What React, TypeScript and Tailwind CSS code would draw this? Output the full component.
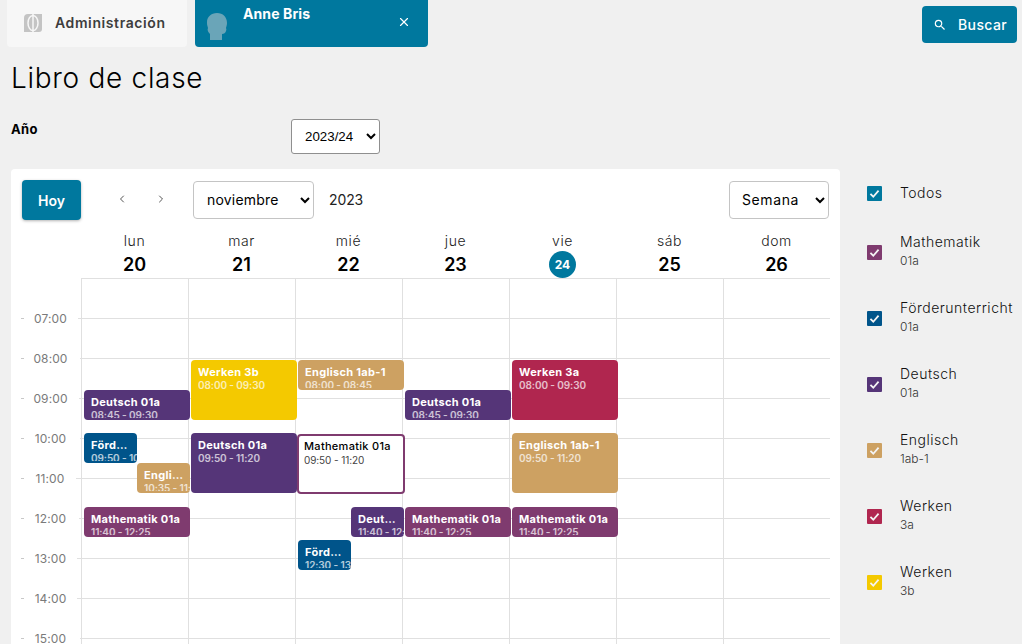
import React from 'react';
import { X, ChevronLeft, ChevronRight } from 'lucide-react';

const font = { fontFamily: 'Inter, "Open Sans", sans-serif' };

const days = [
    { name: 'lun', num: '20' },
    { name: 'mar', num: '21' },
    { name: 'mié', num: '22' },
    { name: 'jue', num: '23' },
    { name: 'vie', num: '24', today: true },
    { name: 'sáb', num: '25' },
    { name: 'dom', num: '26' },
];

const hours = [
    { label: '', line: '' },
    { label: '07:00', line: 'w-[3px]' },
    { label: '08:00', line: 'w-[1px]' },
    { label: '09:00', line: 'w-[2px]' },
    { label: '10:00', line: 'w-[1px]' },
    { label: '11:00', line: 'w-[5px]' },
    { label: '12:00', line: 'w-[2px]' },
    { label: '13:00', line: 'w-[4px]' },
    { label: '14:00', line: 'w-[4px]' },
    { label: '15:00', line: 'w-[1px]' },
];

const colors = {
    teal: 'bg-[#00789e]',
    math: 'bg-[#7f3b6f]',
    blue: 'bg-[#00548a]',
    deutsch: 'bg-[#553578]',
    tan: 'bg-[#cda162]',
    red: 'bg-[#b0264f]',
    yellow: 'bg-[#f4c900]',
};

// x / y are page coordinates taken from the timetable, converted to the grid below
const events = [
    { title: 'Deutsch 01a', time: '08:45 - 09:30', x: 84, y: 390, w: 106, h: 30, bg: colors.deutsch },
    { title: 'Förderunterricht', time: '09:50 - 10:35', x: 84, y: 433, w: 53, h: 30, bg: colors.blue },
    { title: 'Englisch', time: '10:35 - 11:20', x: 137, y: 463, w: 53, h: 30, bg: colors.tan },
    { title: 'Mathematik 01a', time: '11:40 - 12:25', x: 84, y: 507, w: 106, h: 30, bg: colors.math },
    { title: 'Werken 3b', time: '08:00 - 09:30', x: 191, y: 360, w: 106, h: 60, bg: colors.yellow },
    { title: 'Deutsch 01a', time: '09:50 - 11:20', x: 191, y: 433, w: 106, h: 60, bg: colors.deutsch },
    { title: 'Englisch 1ab-1', time: '08:00 - 08:45', x: 298, y: 360, w: 106, h: 30, bg: colors.tan },
    { title: 'Deutsch', time: '11:40 - 12:25', x: 351, y: 507, w: 53, h: 30, bg: colors.deutsch },
    { title: 'Förderunterricht', time: '12:30 - 13:15', x: 298, y: 540, w: 53, h: 30, bg: colors.blue },
    { title: 'Deutsch 01a', time: '08:45 - 09:30', x: 405, y: 390, w: 106, h: 30, bg: colors.deutsch },
    { title: 'Mathematik 01a', time: '11:40 - 12:25', x: 405, y: 507, w: 106, h: 30, bg: colors.math },
    { title: 'Werken 3a', time: '08:00 - 09:30', x: 512, y: 360, w: 106, h: 60, bg: colors.red },
    { title: 'Englisch 1ab-1', time: '09:50 - 11:20', x: 512, y: 433, w: 106, h: 60, bg: colors.tan },
    { title: 'Mathematik 01a', time: '11:40 - 12:25', x: 512, y: 507, w: 106, h: 30, bg: colors.math },
];

const filters = [
    { name: 'Mathematik', sub: '01a', bg: colors.math },
    { name: 'Förderunterricht', sub: '01a', bg: colors.blue },
    { name: 'Deutsch', sub: '01a', bg: colors.deutsch },
    { name: 'Englisch', sub: '1ab-1', bg: colors.tan },
    { name: 'Werken', sub: '3a', bg: colors.red },
    { name: 'Werken', sub: '3b', bg: colors.yellow },
];

const CheckBox = ({ bg }: { bg: string }) => (
    <span className={`flex h-[15px] w-[15px] shrink-0 items-center justify-center rounded-[1px] ${bg}`}>
        <svg viewBox="0 0 16 16" className="h-[13px] w-[13px]" fill="none" stroke="#f4f4f4" strokeWidth="2.2">
            <path d="M3 8.5 6.5 12 13 4.5" />
        </svg>
    </span>
);

const EventBlock = ({ title, time, x, y, w, h, bg }: (typeof events)[number]) => (
    <div
        className={`absolute rounded-[4px] pb-[2px] text-white ${bg}`}
        style={{ left: x - 81, top: y - 279, width: w, height: h }}
    >
        {/* time text gets cut off a bit above the block edge */}
        <div className="h-full overflow-hidden px-[7px] pt-[5px]">
            <div className="truncate text-[11px] font-bold leading-[14px] tracking-[0.3px]">{title}</div>
            <div className="whitespace-nowrap text-[10px] font-semibold leading-[12px] tracking-[-0.1px] opacity-70">{time}</div>
        </div>
    </div>
);

export default function App() {
    return (
        <div className="h-[644px] w-[1022px] overflow-hidden bg-[#f0f0f0] text-black" style={font}>
            {/* TOP TABS */}
            <div className="flex h-[47px] pl-[7px]">
                <div className="flex w-[180px] items-center rounded-b-[4px] bg-[#f7f7f7] pb-[2px] pl-[17px]">
                    <svg viewBox="0 0 18 18" className="h-[18px] w-[18px]">
                        <path d="M4 0h14v15a3 3 0 0 1-3 3H0V4a4 4 0 0 1 4-4Z" fill="#c4c4c4" />
                        <ellipse cx="9" cy="9" rx="5" ry="7.5" fill="none" stroke="#f7f7f7" strokeWidth="1.5" />
                        <path d="M9 0v18" stroke="#f7f7f7" strokeWidth="1.5" />
                    </svg>
                    <span className="ml-[13px] text-[14px] font-semibold tracking-[0.6px] text-[#3d3d3d]">Administración</span>
                </div>
                <div className="relative ml-[8px] flex w-[233px] rounded-b-[4px] bg-[#00789e] pl-[12px]">
                    <svg viewBox="0 0 20 27" className="mt-[13px] h-[27px] w-[20px]" fill="#6aa5b8">
                        <path d="M10 0c6 0 10 4 10 10 0 2-.5 3-1 5 .5 1 .5 2 0 3-.5 2-2 3-4 3v6H3v-6c-2-2-3-4-2-6-1-3-1-4-1-6C0 4 4 0 10 0Z" />
                    </svg>
                    <span className="ml-[16px] mt-[3px] text-[14px] font-bold tracking-[0.1px] text-white">Anne Bris</span>
                    <X className="absolute right-[17px] top-[15px] h-[14px] w-[14px] text-white" strokeWidth={2} />
                </div>
                <button className="ml-auto mr-[5px] mt-[6px] flex h-[37px] w-[95px] items-center rounded-[4px] bg-[#00789e] pl-[11px] text-white">
                    <svg viewBox="0 0 24 24" className="h-[14px] w-[14px]" fill="currentColor">
                        <path d="M15.5 14h-.79l-.28-.27A6.471 6.471 0 0 0 16 9.5 6.5 6.5 0 1 0 9.5 16c1.61 0 3.09-.59 4.23-1.57l.27.28v.79l5 4.99L20.49 19l-4.99-5zm-6 0C7.01 14 5 11.99 5 9.5S7.01 5 9.5 5 14 7.01 14 9.5 11.99 14 9.5 14z" />
                    </svg>
                    <span className="ml-[11px] text-[14px] font-medium tracking-[0.4px]">Buscar</span>
                </button>
            </div>

            <h1 className="ml-[11px] mt-[14px] text-[28px] font-light leading-[34px] tracking-[0.7px]">Libro de clase</h1>

            <div className="ml-[11px] mt-[24px] flex h-[35px]">
                <div className="w-[280px] text-[13px] font-bold leading-[20px] tracking-[0.4px]">Año</div>
                <select
                    defaultValue="2023/24"
                    className="h-[35px] w-[89px] rounded-[3px] border border-[#8f8f8f] bg-white pl-[9px] text-[13.33px] text-black"
                    style={{ fontFamily: '"Liberation Sans", sans-serif' }}
                >
                    <option>2023/24</option>
                </select>
            </div>

            <div className="mt-[15px] flex">
                {/* CALENDAR CARD */}
                <div className="ml-[11px] w-[829px] rounded-t-[4px] bg-white">
                    <div className="box-content flex h-[40px] items-start pl-[11px] pt-[11px]">
                        <button className="h-[40px] w-[59px] rounded-[4px] bg-[#00789e] text-[14px] font-semibold text-white shadow-[0_1px_3px_rgba(0,0,0,0.3)]">
                            Hoy
                        </button>
                        <ChevronLeft className="ml-[35px] mt-[13px] h-[12px] w-[12px] text-[#555]" />
                        <ChevronRight className="ml-[27px] mt-[13px] h-[12px] w-[12px] text-[#555]" />
                        <select
                            defaultValue="noviembre"
                            className="ml-[26px] mt-[1px] h-[38px] w-[121px] rounded-[4px] border border-[#c4c4c4] bg-white pb-[2px] pl-[9px] text-[14px] tracking-[0.2px]"
                        >
                            <option>noviembre</option>
                        </select>
                        <span className="ml-[15px] mt-[9px] text-[14px] tracking-[-0.1px] text-[#222]">2023</span>
                        <select
                            defaultValue="Semana"
                            className="ml-auto mr-[11px] mt-[1px] h-[38px] w-[100px] rounded-[4px] border border-[#c4c4c4] bg-white pb-[2px] pl-[8px] text-[14px] tracking-[0.6px]"
                        >
                            <option>Semana</option>
                        </select>
                    </div>

                    {/* DAY HEADER */}
                    <div className="ml-[70px] flex h-[58px] pt-[12px]">
                        {days.map((day) => (
                            <div key={day.num} className="flex w-[107px] flex-col items-center">
                                <span className="text-[14px] font-light leading-[17px] tracking-[0.6px] text-[#222]">{day.name}</span>
                                {day.today ? (
                                    <span className="mt-[2px] flex h-[27px] w-[27px] items-center justify-center rounded-full bg-[#00789e] text-[12px] font-bold text-white">
                                        {day.num}
                                    </span>
                                ) : (
                                    <span className="mt-[2px] text-[18px] font-semibold leading-[27px]">{day.num}</span>
                                )}
                            </div>
                        ))}
                    </div>

                    {/* GRID */}
                    <div className="relative flex">
                        <div className="w-[70px]">
                            {hours.map((hour, i) => (
                                <div key={hour.label + i} className="relative h-[40px]">
                                    {hours[i + 1] && (
                                        <div className="absolute -bottom-[8px] left-[10px] flex h-[16px] w-[60px] items-center">
                                            <span className="h-px w-[3px] bg-[#c8c8c8]" />
                                            <span className="w-[53px] pt-[1px] text-center text-[12px] tracking-[0.1px] text-[#7a7a7a]">{hours[i + 1].label}</span>
                                            <span className={`ml-auto h-px bg-[#e0e0e0] ${hours[i + 1].line}`} />
                                        </div>
                                    )}
                                </div>
                            ))}
                        </div>
                        <div className="relative flex w-[749px] border-t border-[#e0e0e0]">
                            {days.map((day) => (
                                <div key={day.num} className="w-[107px] border-l border-[#e0e0e0]">
                                    {hours.map((hour, i) => (
                                        <div key={hour.label + i} className="h-[40px] border-b border-[#e0e0e0]" />
                                    ))}
                                </div>
                            ))}
                            {events.map((ev) => (
                                <EventBlock key={ev.title + ev.x + ev.y} {...ev} />
                            ))}
                            <div className="absolute left-[216px] top-[155px] h-[60px] w-[108px] rounded-[4px] border-2 border-[#7f3b6f] bg-white px-[5px] pt-[3px]">
                                <div className="whitespace-nowrap text-[11px] font-medium leading-[14px] tracking-[0.3px] text-black">Mathematik 01a</div>
                                <div className="mt-[1px] whitespace-nowrap text-[10px] leading-[12px] tracking-[-0.1px] text-[#444]">09:50 - 11:20</div>
                            </div>
                        </div>
                    </div>
                </div>

                {/* FILTERS */}
                <div className="ml-[27px] pt-[17px]">
                    <label className="flex h-[15px] items-center">
                        <CheckBox bg={colors.teal} />
                        <span className="ml-[18px] pb-[2px] text-[14px] font-light tracking-[0.5px] text-[#111]">Todos</span>
                    </label>
                    {filters.map((f, i) => (
                        <label key={f.name + f.sub} className={`flex items-center ${i === 0 ? 'mt-[31px]' : 'mt-[26px]'}`}>
                            <CheckBox bg={f.bg} />
                            <span className="ml-[18px] flex flex-col pb-[2px]">
                                <span className="text-[14px] font-light leading-[19px] tracking-[0.5px] text-[#111]">{f.name}</span>
                                <span className="text-[12px] font-light leading-[19px] text-[#333]">{f.sub}</span>
                            </span>
                        </label>
                    ))}
                </div>
            </div>
        </div>
    );
}
